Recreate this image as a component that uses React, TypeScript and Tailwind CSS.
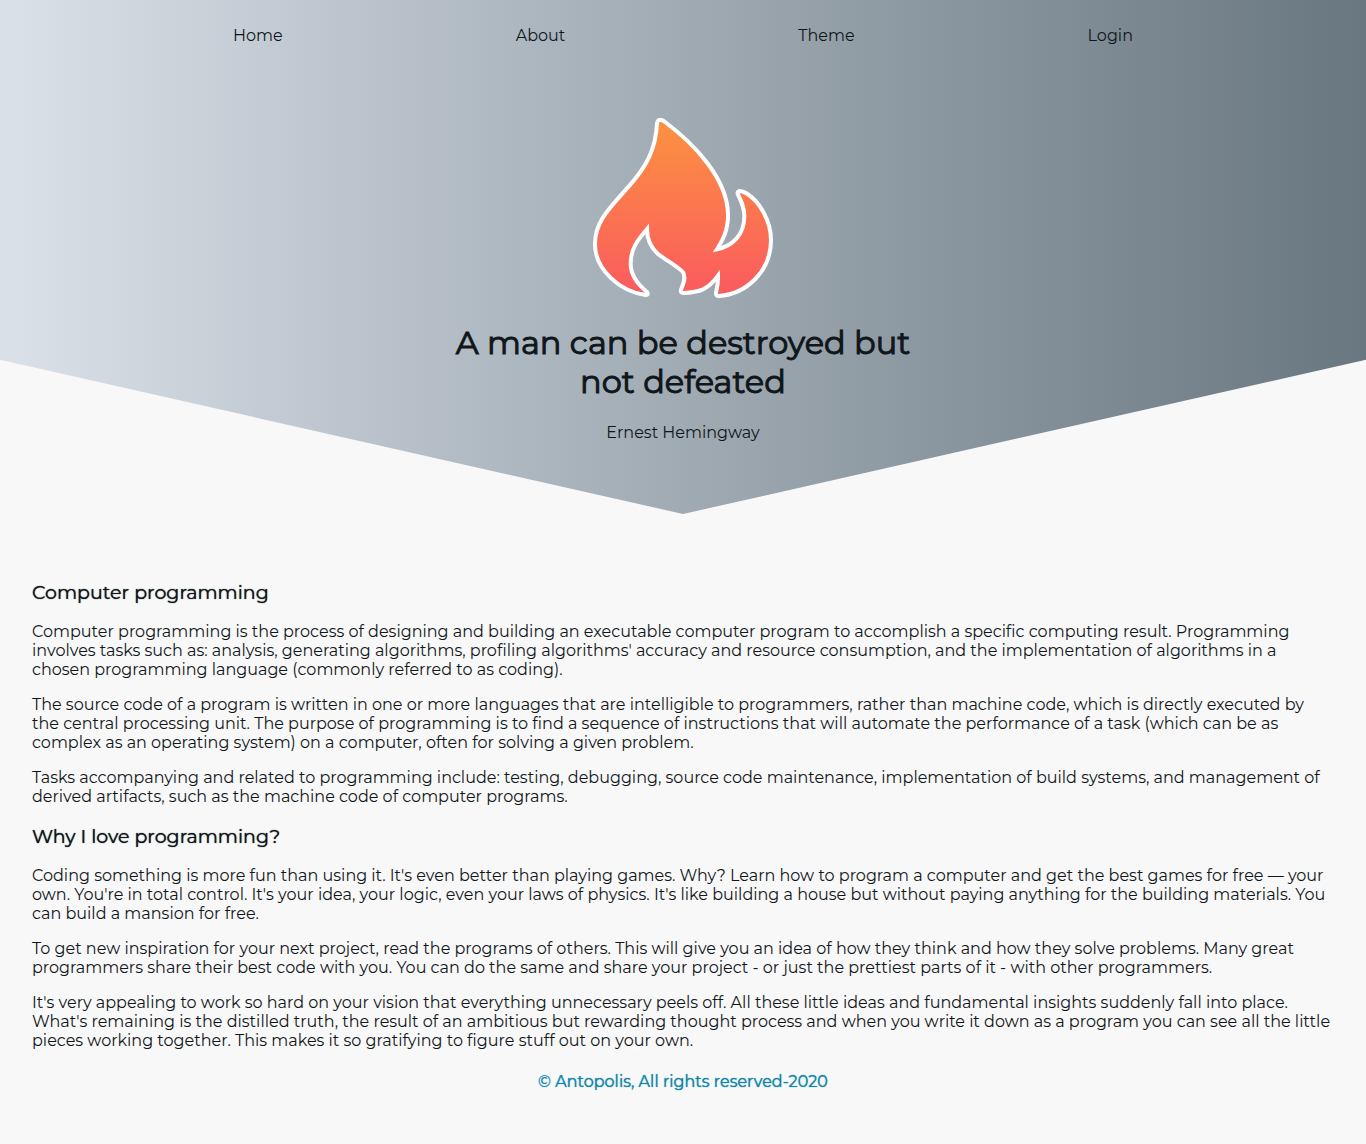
const navItems = ["Home", "About", "Theme", "Login"];

const sections = [
  {
    title: "Computer programming",
    paragraphs: [
      "Computer programming is the process of designing and building an executable computer program to accomplish a specific computing result. Programming involves tasks such as: analysis, generating algorithms, profiling algorithms' accuracy and resource consumption, and the implementation of algorithms in a chosen programming language (commonly referred to as coding).",
      "The source code of a program is written in one or more languages that are intelligible to programmers, rather than machine code, which is directly executed by the central processing unit. The purpose of programming is to find a sequence of instructions that will automate the performance of a task (which can be as complex as an operating system) on a computer, often for solving a given problem.",
      "Tasks accompanying and related to programming include: testing, debugging, source code maintenance, implementation of build systems, and management of derived artifacts, such as the machine code of computer programs.",
    ],
  },
  {
    title: "Why I love programming?",
    paragraphs: [
      "Coding something is more fun than using it. It's even better than playing games. Why? Learn how to program a computer and get the best games for free — your own. You're in total control. It's your idea, your logic, even your laws of physics. It's like building a house but without paying anything for the building materials. You can build a mansion for free.",
      "To get new inspiration for your next project, read the programs of others. This will give you an idea of how they think and how they solve problems. Many great programmers share their best code with you. You can do the same and share your project - or just the prettiest parts of it - with other programmers.",
      "It's very appealing to work so hard on your vision that everything unnecessary peels off. All these little ideas and fundamental insights suddenly fall into place. What's remaining is the distilled truth, the result of an ambitious but rewarding thought process and when you write it down as a program you can see all the little pieces working together. This makes it so gratifying to figure stuff out on your own.",
    ],
  },
];

function Flame() {
  return (
    <svg className="size-[180px]" viewBox="30 30 540 540" role="img" aria-label="Flame">
      <defs>
        <linearGradient id="flame" x1="0" y1="0" x2="0" y2="1">
          <stop offset="0" stopColor="#fc9240" />
          <stop offset="1" stopColor="#fa5a5f" />
        </linearGradient>
      </defs>
      <path
        d="M222 46Q224 35 233 35Q239 36 246 42C330 105 434 210 435 320C436 370 415 403 402 424C450 413 484 380 484 325C484 298 475 280 465 260Q461 250 470 249Q480 250 490 256C530 280 564 340 564 396C564 490 490 558 408 564Q398 564 399 555C402 540 406 525 405 503C375 545 350 553 300 555Q291 554 294 545C300 530 310 510 300 493C285 475 250 458 225 438C205 420 192 395 192 363C165 395 143 420 143 468C143 505 165 530 192 552Q198 560 188 561C110 550 37 485 36 410C35 340 80 300 140 232C190 175 218 125 222 46Z"
        fill="url(#flame)"
        stroke="#fff"
        strokeWidth="12"
        strokeLinejoin="miter"
      />
    </svg>
  );
}

export default function App() {
  return (
    <div className="min-h-screen bg-[#f8f8f8] font-['Montserrat','Inter',sans-serif] text-base leading-[19px] text-[#10161a]">
      <header className="bg-linear-to-r from-[#dae1e9] to-[#697780] pb-[72px] [clip-path:polygon(0_0,100%_0,100%_70%,50%_100%,0_70%)]">
        <nav className="flex justify-evenly pt-[26px]">
          {navItems.map((item) => (
            <a key={item} href="#">
              {item}
            </a>
          ))}
        </nav>
        <div className="flex flex-col items-center pt-[73px] text-center">
          <Flame />
          <h1 className="mt-[25px] max-w-[500px] text-[32px] leading-[39px] font-normal [-webkit-text-stroke:1px_#10161a]">
            A man can be destroyed but not defeated
          </h1>
          <p className="mt-[22px]">Ernest Hemingway</p>
        </div>
      </header>
      <main className="px-8 pt-[67px]">
        {sections.map((section) => (
          <section key={section.title} className="mb-[19px]">
            <h2 className="text-[19px] leading-[23px] font-normal [text-shadow:0_0_1px_#10161a]">
              {section.title}
            </h2>
            <div className="mt-[18px] space-y-4">
              {section.paragraphs.map((text) => (
                <p key={text}>{text}</p>
              ))}
            </div>
          </section>
        ))}
      </main>
      <footer className="pt-[3px] pb-10 text-center text-[#1583a8] [text-shadow:0_0_1px_#1583a8]">
        © Antopolis, All rights reserved-2020
      </footer>
    </div>
  );
}
